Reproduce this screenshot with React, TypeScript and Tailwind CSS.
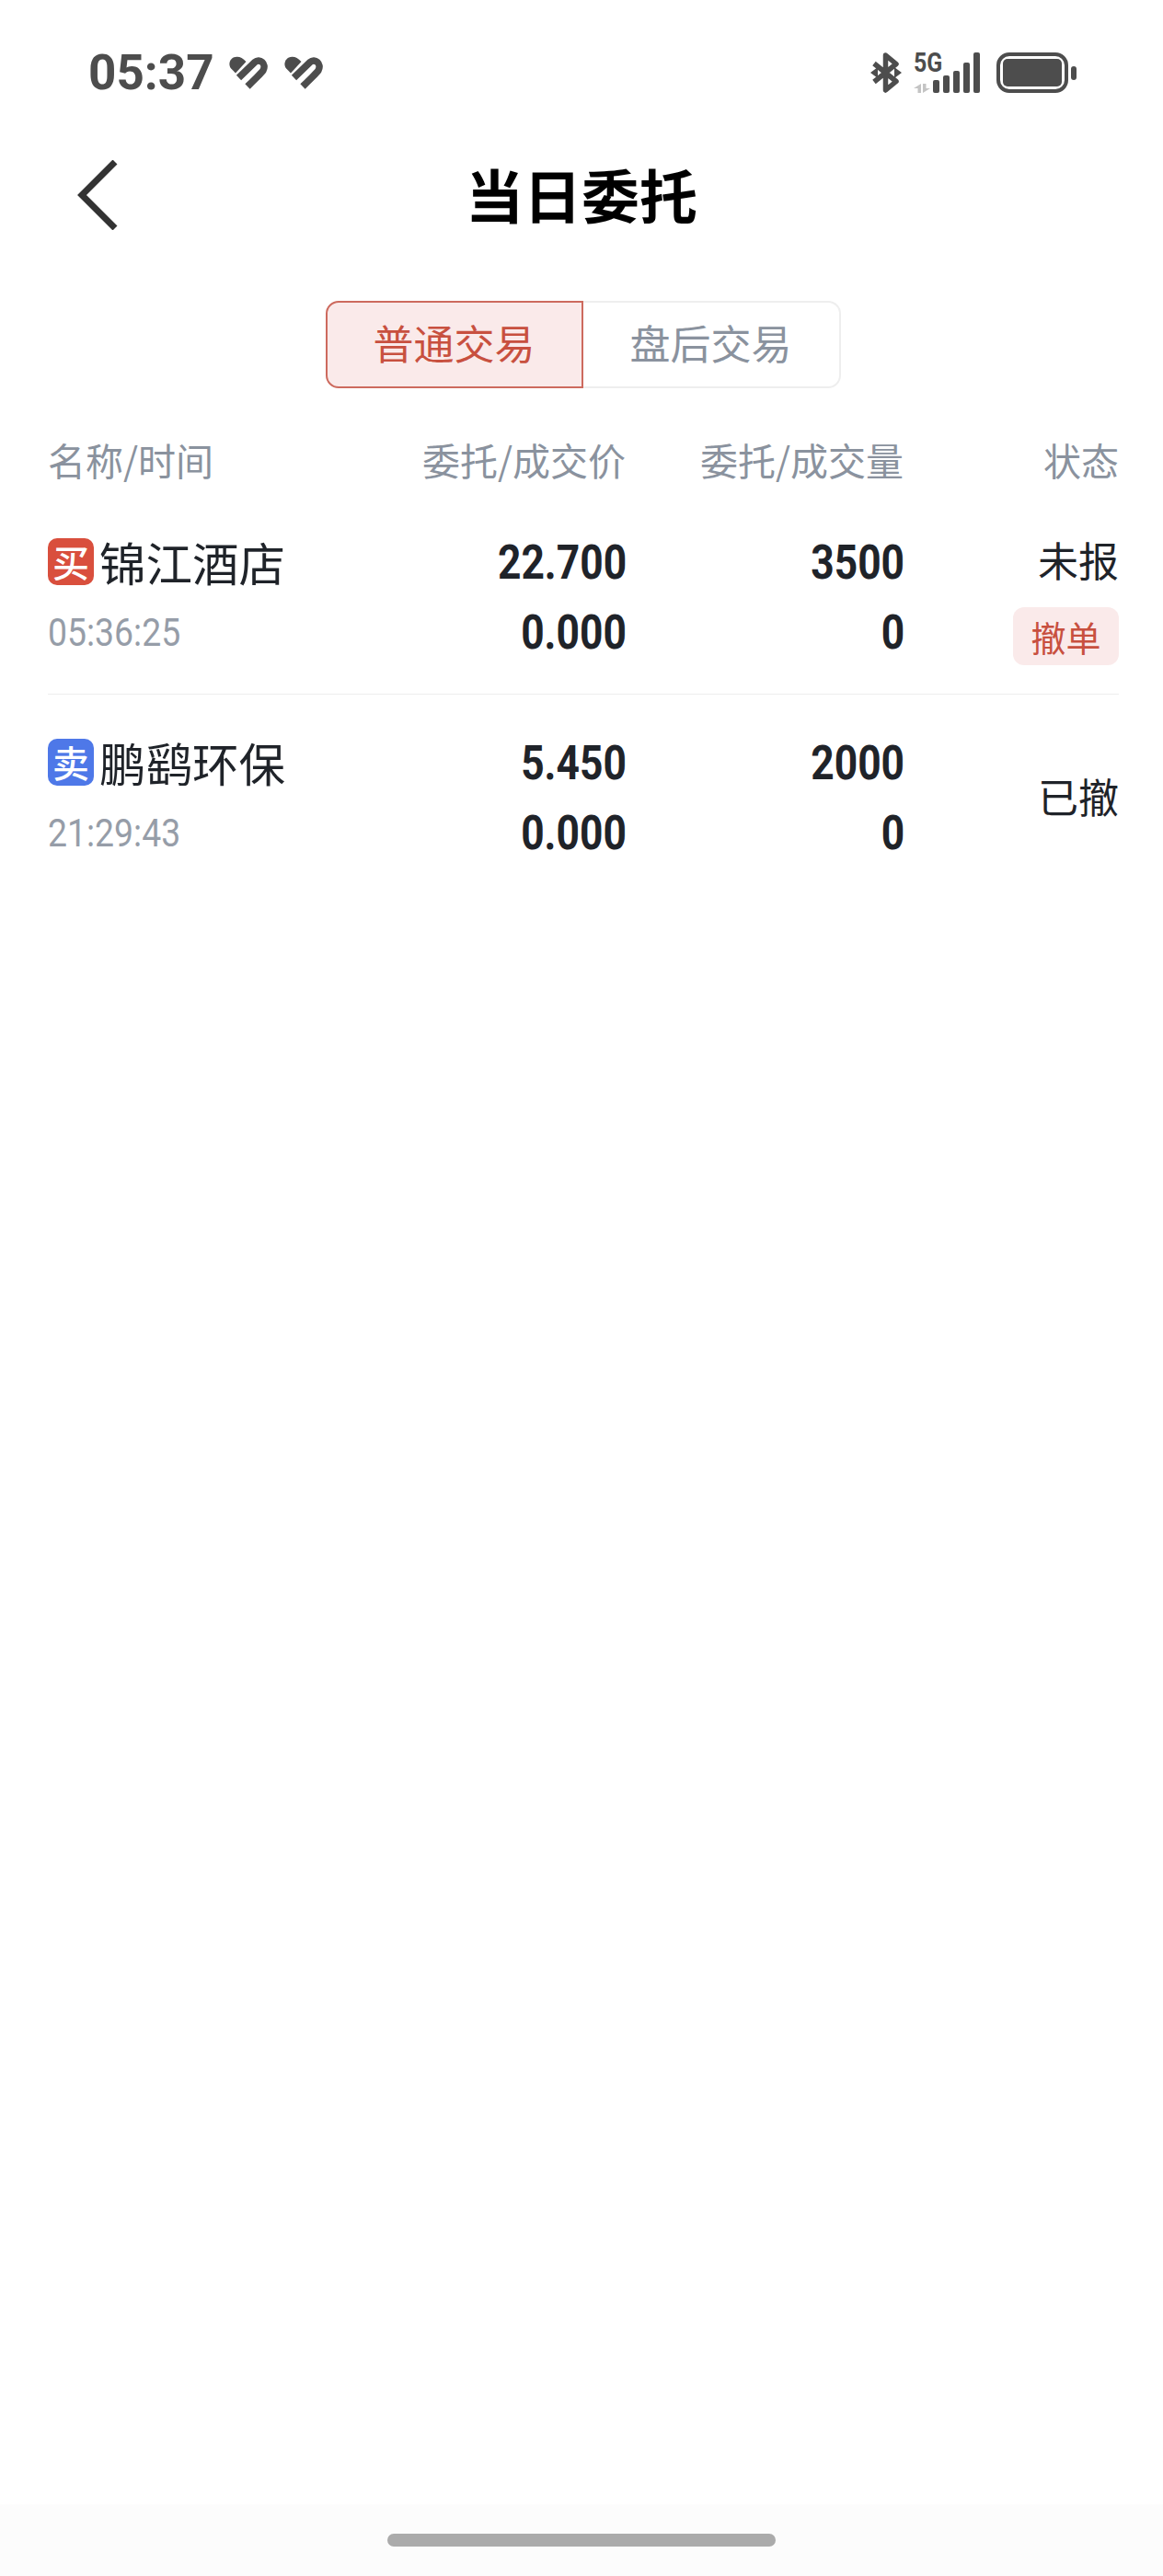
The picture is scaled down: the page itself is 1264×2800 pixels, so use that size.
import React from "react";

const cjk = "font-['Noto_Sans_CJK_SC','Noto_Sans',sans-serif]";

function Heart() {
  return (
    <svg width="42" height="36" viewBox="0 0 42 36" fill="none">
      <path d="M7 18.5 L2.2 13.5 C-1.5 9.5 0.5 1 8.5 0.7 C12 0.6 15 2.5 18.5 6 Z" fill="#4d4d4d" />
      <path d="M10.5 23.5 L28 6.5 C33 2 41 8 37 15.5 C36 17.5 34 19 20 33" stroke="#4d4d4d" strokeWidth="7.5" />
    </svg>
  );
}

function Bluetooth() {
  return (
    <svg width="34" height="44" viewBox="0 0 34 44" fill="none">
      <path d="M4 12 L28 31.5 L16.5 41 V3 L28 12.5 L4 32" stroke="#4d4d4d" strokeWidth="5.5" strokeLinejoin="round" />
      <path d="M0 22 L8 16 V28 Z M34 22 L26 16 V28 Z" fill="#4d4d4d" />
    </svg>
  );
}

function Signal() {
  const bars = [14, 19, 24, 33, 44];
  return (
    <div className="flex items-end gap-[4px] h-[44px]">
      {bars.map((h, i) => (
        <div key={i} className="w-[7px] rounded-[2px] bg-[#4d4d4d]" style={{ height: h }} />
      ))}
    </div>
  );
}

function Battery() {
  return (
    <div className="flex items-center gap-[3px]">
      <div className="w-[78px] h-[44px] rounded-[14px] border-[4px] border-[#4d4d4d] p-[3px]">
        <div className="w-full h-full rounded-[5px] bg-[#4d4d4d]" />
      </div>
      <div className="w-[6px] h-[15px] rounded-[3px] bg-[#4d4d4d]" />
    </div>
  );
}

function StatusBar() {
  return (
    <div className="h-[160px] pt-[57px] pl-[96px] pr-[94px] flex justify-between items-start">
      <div className="flex items-center h-[44px]">
        <span className="font-['Roboto',sans-serif] font-bold text-[53px] leading-[44px] text-[#4d4d4d] mr-[16px]">05:37</span>
        <Heart />
        <div className="ml-[18px]">
          <Heart />
        </div>
      </div>
      <div className="flex items-start">
        <Bluetooth />
        <div className="relative w-[21px] ml-[13px] h-[44px]">
          <span className="absolute left-0 top-[-2px] font-['Roboto',sans-serif] font-bold text-[29px] leading-[26px] text-[#4d4d4d] inline-block origin-left scale-x-[0.86]">5G</span>
          <svg className="absolute left-0 top-[34px]" width="18" height="10" viewBox="0 0 18 10">
            <path d="M8 0 V10 H4.5 V5 H0 Z M10 10 V0 H13.5 V5 H18 Z" fill="#c4c4c4" />
          </svg>
        </div>
        <Signal />
        <div className="ml-[18px]">
          <Battery />
        </div>
      </div>
    </div>
  );
}

function NavBar() {
  return (
    <div className="h-[104px] grid grid-cols-[1fr_auto_1fr] items-center pl-[84px] pr-[84px]">
      <svg width="44" height="76" viewBox="0 0 44 76" fill="none">
        <path d="M41 2 L5 38 L41 74" stroke="#333333" strokeWidth="7" />
      </svg>
      <h1 className={`${cjk} text-[63px] leading-[76px] h-[80px] font-bold text-black`}>当日委托</h1>
      <div />
    </div>
  );
}

function Tabs() {
  return (
    <div className={`${cjk} mt-[63px] ml-[3px] flex justify-center text-[44px] leading-[87px] h-[95px]`}>
      <div className="w-[280px] text-center border-2 border-[#cd6a5e] rounded-l-[14px] bg-[#faeaea] text-[#c8503f]">普通交易</div>
      <div className="w-[280px] text-center border-2 border-l-0 border-[#eeeeee] rounded-r-[14px] text-[#8a929e]">盘后交易</div>
    </div>
  );
}

const cols = "grid grid-cols-[1fr_260px_302px_234px] ml-[52px] mr-[48px]";

function Num({ children }: { children: string }) {
  return (
    <div className="h-[76px] text-right font-['Roboto',sans-serif] font-bold text-[51px] leading-[79px] text-[#1f2329]">
      <span className="inline-block origin-right scale-x-[0.87] translate-x-[1px]">{children}</span>
    </div>
  );
}

type Order = {
  side: string;
  sideCls: string;
  name: string;
  time: string;
  price: string;
  qty: string;
  status: string;
  cancel?: boolean;
};

const orders: Order[] = [
  { side: "买", sideCls: "bg-[#d94f3d]", name: "锦江酒店", time: "05:36:25", price: "22.700", qty: "3500", status: "未报", cancel: true },
  { side: "卖", sideCls: "bg-[#4e78e8]", name: "鹏鹞环保", time: "21:29:43", price: "5.450", qty: "2000", status: "已撤" },
];

function Row({ o, last }: { o: Order; last: boolean }) {
  return (
    <div className={`${cols} pt-[35px] h-[218px] ${last ? "" : "border-b border-[#eeeeee]"}`}>
      <div>
        <div className="h-[76px] flex items-center gap-[6px]">
          <div className={`${cjk} ${o.sideCls} w-[50px] h-[51px] rounded-[10px] flex items-center justify-center font-medium text-white text-[40px] leading-none`}>{o.side}</div>
          <span className={`${cjk} text-[50.5px] leading-[76px] text-[#1f2329]`}>{o.name}</span>
        </div>
        <div className="h-[76px] font-['Roboto',sans-serif] text-[42px] leading-[80px] text-[#969da8]">
          <span className="inline-block origin-left scale-x-[0.89]">{o.time}</span>
        </div>
      </div>
      <div>
        <Num>{o.price}</Num>
        <Num>0.000</Num>
      </div>
      <div>
        <Num>{o.qty}</Num>
        <Num>0</Num>
      </div>
      {o.cancel ? (
        <div className="flex flex-col items-end">
          <div className={`${cjk} h-[76px] text-[44px] leading-[72px] text-[#1f2329]`}>{o.status}</div>
          <button className={`${cjk} mt-[12px] w-[115px] h-[63px] rounded-[12px] bg-[#faeaea] text-[#c8503f] text-[38px] leading-[60px] text-center`}>撤单</button>
        </div>
      ) : (
        <div className={`${cjk} h-[150px] flex items-center justify-end text-[44px] text-[#1f2329]`}>{o.status}</div>
      )}
    </div>
  );
}

export default function App() {
  return (
    <div className="w-full h-[2800px] bg-white flex flex-col">
      <StatusBar />
      <NavBar />
      <Tabs />
      <div className={`${cols} ${cjk} mt-[47px] mb-[8px] h-[60px] items-center text-[41px] leading-[60px] text-[#8a929e]`}>
        <div>名称/时间</div>
        <div className="text-right">委托/成交价</div>
        <div className="text-right">委托/成交量</div>
        <div className="text-right">状态</div>
      </div>
      {orders.map((o, i) => (
        <Row key={o.name} o={o} last={i === orders.length - 1} />
      ))}
      <div className="mt-auto h-[78px] bg-[#fcfcfc] pt-[32px] flex justify-center">
        <div className="w-[422px] h-[14px] rounded-full bg-[#ababab]" />
      </div>
    </div>
  );
}
